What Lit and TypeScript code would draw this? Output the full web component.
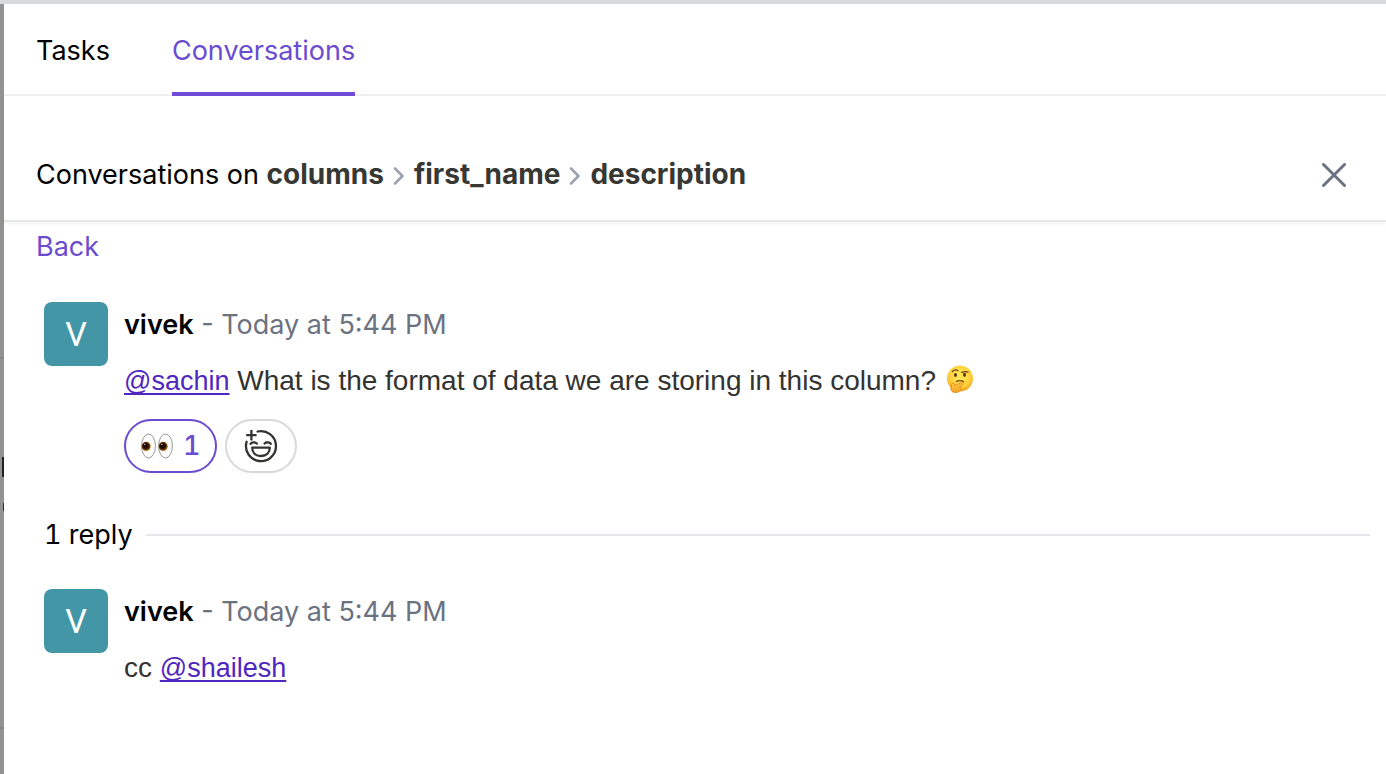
import { LitElement, html, css, svg } from "lit";
import { customElement, property } from "lit/decorators.js";

const eyes = html`<svg class="eyes" viewBox="0 0 32 26" aria-hidden="true">
  <defs>
    <radialGradient id="iris" cx="45%" cy="45%" r="55%">
      <stop offset="0.45" stop-color="#2b1208" />
      <stop offset="0.75" stop-color="#6b3a0c" />
      <stop offset="1" stop-color="#c98f2a" />
    </radialGradient>
  </defs>
  ${[0, 17].map(
    (x) => svg`<g transform=${`translate(${x} 0)`}>
      <ellipse cx="7.5" cy="13" rx="6.9" ry="12" fill="#fdfdfd" stroke="#8d8d8d" stroke-width="0.9" />
      <circle cx="5.2" cy="13.4" r="4.6" fill="url(#iris)" />
      <circle cx="4.8" cy="13" r="2.7" fill="#1d0a04" />
      <circle cx="3.8" cy="11.4" r="0.7" fill="#e8d8c0" />
    </g>`
  )}
</svg>`;

const thinking = html`<svg class="emoji" viewBox="0 0 28 28" role="img" aria-label="thinking face">
  <defs>
    <radialGradient id="skin" cx="50%" cy="38%" r="62%">
      <stop offset="0.3" stop-color="#ffe34f" />
      <stop offset="0.75" stop-color="#fdc936" />
      <stop offset="1" stop-color="#f0a020" />
    </radialGradient>
    <linearGradient id="hand" x1="0" y1="0" x2="0" y2="1">
      <stop offset="0" stop-color="#ffcf45" />
      <stop offset="1" stop-color="#f3a024" />
    </linearGradient>
  </defs>
  <circle cx="14" cy="13.5" r="13" fill="url(#skin)" />
  <ellipse cx="9.5" cy="10" rx="1.5" ry="2.1" fill="#5b3514" />
  <ellipse cx="18.5" cy="9.8" rx="1.5" ry="2.1" fill="#5b3514" />
  <path d="M6.4 6.6C7.8 4.8 10.2 4.6 12 5.8" fill="none" stroke="#704014" stroke-width="1.3" stroke-linecap="round" />
  <path d="M15.6 7.4C17.6 6.6 19.8 6.4 22 7.2" fill="none" stroke="#704014" stroke-width="1.3" stroke-linecap="round" />
  <path d="M10.5 16.4C13 15.2 15.6 15.4 17.6 16.6" fill="none" stroke="#704014" stroke-width="1.3" stroke-linecap="round" />
  <path d="M6 19.2C6 17.6 8 17.4 8.4 19L8.8 20.4L15.2 17.8C17 17.2 17.8 19.2 16.2 20L13.4 21.4C15.2 21.6 15.6 23.2 14.6 24C14 26.4 12.2 27.6 9.4 27.6C6.4 27.6 4.6 25.8 4.8 23Z" fill="url(#hand)" stroke="#dc8618" stroke-width="0.8" stroke-linejoin="round" />
</svg>`;

const addReaction = html`<svg class="smile" viewBox="0 0 34 34" aria-hidden="true" fill="none" stroke="#333331" stroke-width="2.3" stroke-linecap="round" stroke-linejoin="round">
  <path d="M13.6 2.5A15 15 0 1 1 2.6 12.8" />
  <path d="M7.4 1V11.4M2.2 6.2H12.6" stroke-linecap="butt" />
  <path d="M6.6 14.8C7.8 12.8 11.2 12.8 12.8 14.6" />
  <path d="M20.6 14.6C22.2 12.8 25.6 12.8 26.8 14.8" />
  <path d="M8.2 18.6H25.8C25.8 23.6 22.6 27 17 27S8.2 23.6 8.2 18.6Z" />
</svg>`;

const chevron = html`<svg class="chevron" viewBox="0 0 12 20" aria-hidden="true">
  <path d="M2 2.5L9.5 10L2 17.5" fill="none" stroke="#9ca3af" stroke-width="2.6" stroke-linecap="round" stroke-linejoin="round" />
</svg>`;

@customElement("comment-item")
export class CommentItem extends LitElement {
  @property() author = "";
  @property() time = "";

  static styles = css`
    :host {
      display: flex;
      gap: 16px;
      align-items: flex-start;
    }
    .avatar {
      display: flex;
      align-items: center;
      justify-content: center;
      flex: none;
      width: 64px;
      height: 64px;
      border-radius: 8px;
      background: #4396a6;
      color: #fff;
      font-size: 34px;
      font-family: Roboto, sans-serif;
    }
    .content {
      display: flex;
      flex-direction: column;
      gap: 18px;
      flex: 1;
      min-width: 0;
      padding-top: 4px;
    }
    .meta {
      color: #6b7280;
    }
    .author {
      color: #000;
      font-weight: 600;
    }
  `;

  render() {
    return html`
      <div class="avatar" aria-hidden="true">${this.author.charAt(0).toUpperCase()}</div>
      <div class="content">
        <div class="meta"><span class="author">${this.author}</span> - <time>${this.time}</time></div>
        <slot></slot>
      </div>
    `;
  }
}

@customElement("app-root")
export class AppRoot extends LitElement {
  static styles = css`
    :host {
      display: flex;
      box-sizing: border-box;
      min-height: 100vh;
      border-top: 4px solid #d9dadd;
      background: #fff;
      font: 400 27px/38px Inter, sans-serif;
      color: #000;
    }
    .backdrop {
      display: flex;
      flex-direction: column;
      align-items: flex-end;
      flex: none;
      width: 4px;
      background: #939291;
    }
    .rule {
      width: 4px;
      height: 2px;
      margin-top: 353px;
      background: #85858a;
    }
    .mark {
      width: 2px;
      height: 20px;
      margin-top: 98px;
      background: #222;
    }
    .dot {
      width: 1px;
      height: 8px;
      margin-top: 26px;
      background: #333;
    }
    .rule.low {
      margin-top: 216px;
    }
    .panel {
      flex: 1;
      min-width: 0;
    }
    .tabs {
      display: flex;
      gap: 62px;
      padding: 0 32px;
      border-bottom: 2px solid #f0f0f0;
    }
    .tab {
      margin: 0 0 -2px;
      padding: 28px 0 22px;
      border: 0;
      border-bottom: 4px solid transparent;
      background: none;
      font: inherit;
      color: inherit;
    }
    .tab.active {
      color: #6b4bd0;
      border-color: #6f4bd8;
    }
    .head {
      display: flex;
      align-items: center;
      justify-content: space-between;
      padding: 59px 32px 26px;
      border-bottom: 2px solid #e5e7eb;
      box-shadow: 0 2px 4px rgba(0, 0, 0, 0.05);
    }
    .title {
      margin: 0;
      font: inherit;
    }
    .title b {
      font-size: 28px;
      font-weight: 700;
      color: #373734;
    }
    .chevron {
      width: 12px;
      height: 20px;
      margin: 0 9px;
      vertical-align: -2px;
    }
    .close {
      display: flex;
      padding: 6px 8px;
      border: 0;
      background: none;
    }
    .close svg {
      width: 24px;
      height: 24px;
    }
    .back {
      display: block;
      width: fit-content;
      margin: 6px 32px 0;
      color: #6b4bd0;
      text-decoration: none;
    }
    .thread {
      display: flex;
      flex-direction: column;
      padding: 36px 16px 36px 40px;
    }
    .text {
      margin: 0;
      font-family: "Liberation Sans", Arial, sans-serif;
      font-size: 28px;
      color: #333331;
    }
    .text a {
      font-size: 27px;
      color: #4f26bf;
      text-decoration-thickness: 2px;
      text-decoration-skip-ink: none;
      text-underline-offset: 3px;
    }
    .emoji {
      width: 28px;
      height: 28px;
      margin-left: 2px;
      vertical-align: -3px;
    }
    .reactions {
      display: flex;
      gap: 8px;
      padding-top: 1px;
    }
    .pill {
      display: flex;
      align-items: center;
      justify-content: center;
      gap: 10px;
      height: 54px;
      padding: 0 17px;
      border: 2px solid #d9d9d9;
      border-radius: 27px;
      background: #fff;
      font: inherit;
      font-variant-numeric: tabular-nums;
      color: #6b4bd0;
      box-shadow: 0 2px 2px rgba(0, 0, 0, 0.02);
    }
    .pill.mine {
      padding: 0 14px 0 15px;
      border-color: #6b4bd0;
      font-weight: 500;
    }
    .eyes {
      width: 32px;
      height: 26px;
    }
    .smile {
      width: 34px;
      height: 34px;
    }
    .replies {
      display: flex;
      align-items: center;
      gap: 13px;
      margin: 43px 0 35px;
      font-variant-numeric: tabular-nums;
    }
    .line {
      flex: 1;
      height: 2px;
      margin: 0;
      border: 0;
      background: #e5e7eb;
    }
  `;

  render() {
    return html`
      <div class="backdrop" aria-hidden="true">
        <div class="rule"></div>
        <div class="mark"></div>
        <div class="dot"></div>
        <div class="rule low"></div>
      </div>
      <main class="panel">
        <nav class="tabs">
          <button class="tab">Tasks</button>
          <button class="tab active" aria-current="page">Conversations</button>
        </nav>
        <header class="head">
          <h1 class="title">Conversations on <b>columns</b>${chevron}<b>first_name</b>${chevron}<b>description</b></h1>
          <button class="close" aria-label="Close">
            <svg viewBox="0 0 24 24" aria-hidden="true">
              <path d="M1.5 1.5L22.5 22.5M22.5 1.5L1.5 22.5" fill="none" stroke="#6b7280" stroke-width="3" stroke-linecap="round" />
            </svg>
          </button>
        </header>
        <a class="back" href="#back">Back</a>
        <section class="thread">
          <comment-item author="vivek" time="Today at 5:44 PM">
            <p class="text"><a href="#sachin">@sachin</a> What is the format of data we are storing in this column? ${thinking}</p>
            <div class="reactions">
              <button class="pill mine" aria-label="Eyes, 1">${eyes}<span>1</span></button>
              <button class="pill" aria-label="Add reaction">${addReaction}</button>
            </div>
          </comment-item>
          <div class="replies"><span>1 reply</span><hr class="line" /></div>
          <comment-item author="vivek" time="Today at 5:44 PM">
            <p class="text">cc <a href="#shailesh">@shailesh</a></p>
          </comment-item>
        </section>
      </main>
    `;
  }
}
